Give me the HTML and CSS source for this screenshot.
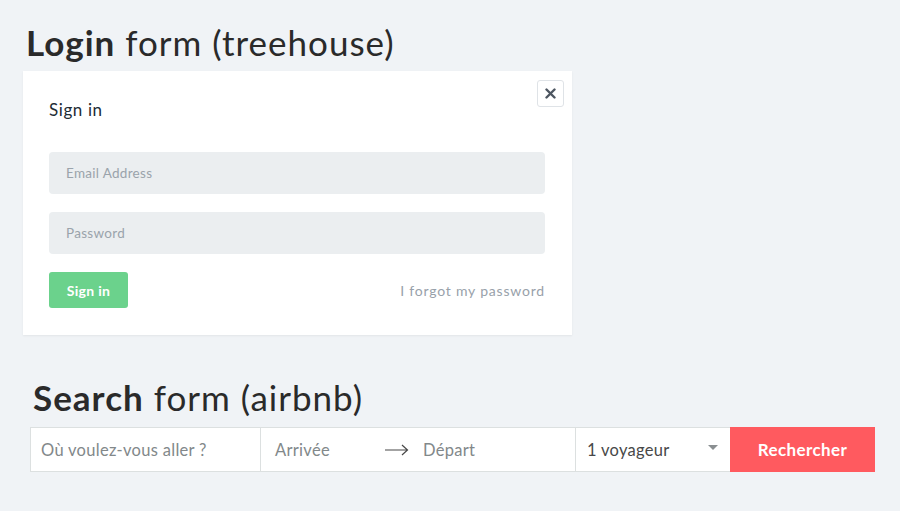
FILE: index.html
```html
<!DOCTYPE html>
<html lang="fr">
<head>
<meta charset="utf-8">
<title>Forms</title>
<link rel="stylesheet" href="styles.css">
</head>
<body>
<main class="page">
  <section class="login-section">
    <h1 class="title"><strong>Login</strong> form (treehouse)</h1>
    <div class="card">
      <button class="close" aria-label="Close">
        <svg width="11" height="11" viewBox="0 0 11 11"><path d="M1.5 1.5 L9.5 9.5 M9.5 1.5 L1.5 9.5" stroke="#4d5661" stroke-width="2.4" stroke-linecap="round"/></svg>
      </button>
      <h2 class="card-title">Sign in</h2>
      <div class="field">Email Address</div>
      <div class="field">Password</div>
      <div class="card-actions">
        <button class="btn-green">Sign in</button>
        <a class="forgot">I forgot my password</a>
      </div>
    </div>
  </section>
  <section class="search-section">
    <h1 class="title title-search"><strong>Search</strong> form (airbnb)</h1>
    <div class="searchbar">
      <div class="seg seg-where">Où voulez-vous aller ?</div>
      <div class="seg seg-dates">
        <span class="date">Arrivée</span>
        <svg class="arrow" width="24" height="12" viewBox="0 0 24 12"><path d="M0 6 H22 M17 1 L22.5 6 L17 11" fill="none" stroke="#484848" stroke-width="1.2"/></svg>
        <span class="date">Départ</span>
      </div>
      <div class="seg seg-guests">
        <span>1 voyageur</span>
        <span class="caret"></span>
      </div>
      <button class="btn-red">Rechercher</button>
    </div>
  </section>
</main>
</body>
</html>
```
FILE: styles.css
```css
html, body {
  margin: 0;
  padding: 0;
  background: #f0f3f6;
}
body {
  font-family: "Lato", "Open Sans", sans-serif;
  color: #2b2b2b;
}
.page {
  padding: 22px 0 0 23px;
}
.title {
  margin: 0 0 9px 3px;
  font-size: 35px;
  font-weight: 400;
  line-height: 40px;
  color: #2a2a2a;
  letter-spacing: 1px;
}
.title strong {
  font-weight: 700;
}
.card {
  position: relative;
  box-sizing: border-box;
  width: 549px;
  height: 264px;
  background: #fff;
  box-shadow: 0 1px 2px rgba(0,0,0,0.06);
  padding: 26px 27px 0 26px;
}
.close {
  position: absolute;
  top: 9px;
  right: 8px;
  width: 27px;
  height: 27px;
  padding: 0;
  border: 1px solid #dfe3e7;
  border-radius: 3px;
  background: #fff;
  display: flex;
  align-items: center;
  justify-content: center;
}
.card-title {
  margin: 0 0 29px;
  font-size: 17px;
  font-weight: 400;
  line-height: 26px;
  color: #222c35;
  letter-spacing: 0.6px;
}
.field {
  height: 42px;
  box-sizing: border-box;
  background: #ebeef0;
  border-radius: 4px;
  padding-left: 17px;
  line-height: 42px;
  font-size: 13.5px;
  color: #9aa3ab;
  letter-spacing: 0.3px;
  margin-bottom: 18px;
}
.card-actions {
  display: flex;
  align-items: center;
  justify-content: space-between;
}
.btn-green {
  width: 79px;
  height: 36px;
  border: none;
  border-radius: 3px;
  background: #6bd28c;
  color: #fff;
  font-family: "Lato", sans-serif;
  font-weight: 700;
  font-size: 14px;
  letter-spacing: 0.3px;
}
.forgot {
  font-size: 14px;
  color: #98a1aa;
  letter-spacing: 0.8px;
}
.search-section {
  margin-top: 42px;
}
.title-search {
  margin-left: 10px;
  margin-bottom: 10px;
}
.searchbar {
  display: flex;
  width: 845px;
  height: 45px;
  margin-left: 7px;
  box-sizing: border-box;
  border: 1px solid #dce0e0;
  background: #fff;
}
.seg {
  display: flex;
  align-items: center;
  font-size: 16.5px;
  letter-spacing: 0.3px;
  color: #82888a;
  box-sizing: border-box;
  border-right: 1px solid #dce0e0;
}
.seg-where {
  width: 230px;
  padding-left: 10px;
}
.seg-dates {
  width: 315px;
  padding-left: 14px;
}
.seg-dates .date:first-child {
  width: 110px;
}
.arrow {
  margin-right: 14px;
}
.seg-guests {
  width: 154px;
  padding: 0 12px 0 11px;
  color: #484848;
  justify-content: space-between;
  border-right: none;
}
.caret {
  width: 0;
  height: 0;
  border-left: 5px solid transparent;
  border-right: 5px solid transparent;
  border-top: 5px solid #8a8f91;
  margin-top: -4px;
}
.btn-red {
  flex: 1;
  border: none;
  margin: -1px -1px -1px 0;
  background: #ff5a5f;
  color: #fff;
  font-family: "Lato", sans-serif;
  font-weight: 700;
  font-size: 17px;
  letter-spacing: 0.4px;
}
```
